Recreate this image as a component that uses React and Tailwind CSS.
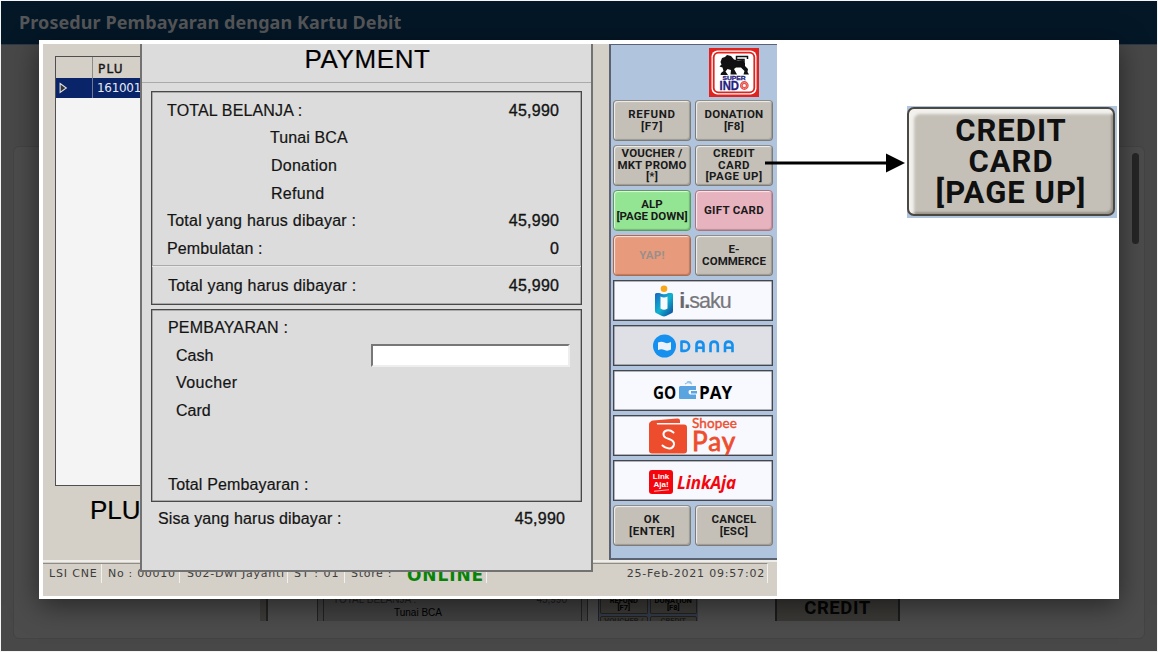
const ROW = "flex h-[27.6px] items-center justify-between";
const AMOUNT = "tracking-[0.25px] -mr-[0.25px] [-webkit-text-stroke:0.35px_#141414]";

function PosKey({ lines, tone = "bg-[#c4c0b8] border-[#7d7b76] border-t-[#8f8d88]", text = "text-[#1a1a1a]", tight = "tracking-[0.7px]" }) {
  return (
    <div className={`flex h-[41px] flex-col items-center justify-center rounded-[4px] border-[1.5px] font-['Roboto',sans-serif] shadow-[inset_1px_1px_1px_rgba(255,255,255,0.75),inset_-1px_-1px_1px_rgba(0,0,0,0.2)] ${tone}`}>
      {lines.map((l) => (
        <div key={l} className={`whitespace-nowrap text-[11.5px] leading-[11.4px] font-bold ${text} ${tight}`}>{l}</div>
      ))}
    </div>
  );
}

function WalletKey({ children, bg = "bg-[#f8f9ff]" }) {
  return (
    <div className={`col-span-2 flex h-[41px] items-center justify-center overflow-hidden border-[1.5px] border-[#44484e] shadow-[inset_0_0_0_0.5px_#6a6e74] ${bg}`}>
      {children}
    </div>
  );
}

function SuperIndo() {
  return (
    <svg className="h-[49px] w-[50px]" viewBox="0 0 50 49">
      <rect width="50" height="49" fill="#e0231f" />
      <rect x="2.5" y="2.5" width="45" height="44" rx="6" fill="#fff" />
      <rect x="3.800" y="3.800" width="42.400" height="41.400" rx="5.500" fill="#e0231f" />
      <rect x="5.6" y="5.6" width="38.8" height="37.8" rx="4" fill="#fff" />
      <path d="M11.500 14 L13 10 L16 9 L18 7 L22 8 L25 11.500 L29 12.500 L34 12 L36 15 L36 18 L39 21 L38.500 24 L40 26.500 L34.500 26.500 L35.500 23 L32 19.500 L27 19.500 L25 21 L28 26.500 L21.500 26.500 L22 22 L18.500 21 L16.500 23.500 L19 27 L11.500 27 L12 25 L14.500 23 L13.500 19.500 L10.500 18.500 L12.500 16.500 Z" fill="#111" />
      <path d="M35 14.500 V11.500 H27.500 V8.500 H38.500 V11" fill="none" stroke="#111" strokeWidth="1.500" />
      <text x="25" y="32" textAnchor="middle" textLength="23" lengthAdjust="spacingAndGlyphs" fontFamily="Liberation Sans, sans-serif" fontWeight="bold" fontSize="5.500" stroke="#26217c" strokeWidth="0.300" fill="#26217c">SUPER</text>
      <text x="10.500" y="42" textLength="19.500" lengthAdjust="spacingAndGlyphs" fontFamily="Liberation Sans, sans-serif" fontWeight="bold" fontSize="12" stroke="#26217c" strokeWidth="0.300" fill="#26217c">IND</text>
      <circle cx="35.300" cy="37.500" r="3" fill="none" stroke="#e8504a" strokeWidth="2.800" />
      <circle cx="35.300" cy="37.500" r="3" fill="none" stroke="#fbc9c6" strokeWidth="0.700" strokeDasharray="1.300 1" />
    </svg>
  );
}

function ISaku() {
  return (
    <div className="flex items-center gap-[6px]">
      <svg className="h-[32px] w-[18px]" viewBox="0 0 18 32">
        <defs>
          <linearGradient id="isaku" x1="0" y1="0" x2="1" y2="1">
            <stop offset="0" stopColor="#1566c4" />
            <stop offset="0.500" stopColor="#10b4cf" />
            <stop offset="1" stopColor="#123f9b" />
          </linearGradient>
        </defs>
        <circle cx="9" cy="3.800" r="3.300" fill="#f9a61a" />
        <path d="M0 9.500 Q0 8 1.500 8 H4.500 Q9 10.500 13.500 8 H16.500 Q18 8 18 9.500 V26 Q18 28 16 28.600 L11 31 Q9 31.800 7 31 L2 28.600 Q0 28 0 26 Z" fill="url(#isaku)" />
        <path d="M5.500 11.500 Q9 13.500 12.500 11.500 V23.500 Q9 26 5.500 23.500 Z" fill="#f8f9ff" />
      </svg>
      <div className="pt-[2px] text-[21.5px] leading-none tracking-[-0.95px] text-[#77777b] [-webkit-text-stroke:0.2px_#77777b]"><b className="text-[#68686c]">i.</b>saku</div>
    </div>
  );
}

function Dana() {
  return (
    <svg className="ml-[2px] h-[26px] w-[82px]" viewBox="0 0 82 26">
      <circle cx="11.500" cy="13" r="11.500" fill="#1590ee" />
      <path d="M5 9.500 Q8.500 8 11.500 9.500 T18 9 V16.500 Q14.500 18.500 11.500 17 T5 17 Z" fill="#eaf1fb" />
      <g fill="none" stroke="#1590ee" strokeWidth="2.600" strokeLinejoin="round">
        <path d="M28.500 8.600 H31.500 A4.600 4.600 0 0 1 31.500 17.900 H28.500 Z" />
        <path d="M43.500 19.300 V12 Q43.500 8.600 46.800 8.600 T50.500 12 V19.300 M43.500 14.800 H50.500" />
        <path d="M57.500 19.300 V12 Q57.500 8.600 61 8.600 T64.800 12 V19.300" />
        <path d="M72 19.300 V12 Q72 8.600 75.500 8.600 T79.500 12 V19.300 M72 14.800 H79.500" />
      </g>
    </svg>
  );
}

function GoPay() {
  return (
    <div className="flex items-center gap-[2px] pt-[3px] pr-px font-['Open_Sans',sans-serif] text-[18px] leading-none font-bold text-black">
      <span className="inline-block w-[24px] origin-left scale-x-[0.85]">GO</span>
      <svg className="h-[18px] w-[18px] -translate-y-[2px]" viewBox="0 0 18 18">
        <path d="M1 5 H17 V9 H11 Q9.500 9 9.500 11 T11 13.500 H17 V18 H1 Q0 18 0 17 V6 Z" fill="#5aa5df" />
        <path d="M12 10 H18 V12.500 H12 Z" fill="#5aa5df" />
        <path d="M6 3 Q9 0.500 13 3 M8 1 Q10 0 12.500 1.500" fill="none" stroke="#8cc2ea" strokeWidth="1.200" />
      </svg>
      <span className="inline-block w-[33px] origin-left scale-x-[0.95]">PAY</span>
    </div>
  );
}

function ShopeePay() {
  return (
    <div className="flex items-center gap-[5px]">
      <svg className="h-[36px] w-[38px]" viewBox="0 0 38 36">
        <path d="M1 5 Q1 3 4 2.500 L28 0.500 Q31 0.200 31 2.500 V5 Z" fill="#ee4d2d" />
        <rect x="0" y="6.500" width="38" height="29" rx="3" fill="#ee4d2d" />
        <rect x="0" y="4" width="8" height="9" rx="2" fill="#ee4d2d" />
        <path d="M24.500 14.500 Q21 11.500 17.500 12.500 Q13.500 14 14.800 17.800 Q15.500 19.800 20 21 Q25.500 22.800 25 26.500 Q24 31 19 30.300 Q16 30 13.500 27.500" fill="none" stroke="#fff" strokeWidth="2" strokeLinecap="round" />
      </svg>
      <div className="-mt-[2px] flex w-[45px] flex-col font-['Lato',sans-serif] text-[#ee4d2d]">
        <span className="text-[13.5px] leading-[14px] font-normal tracking-[0.15px] [-webkit-text-stroke:0.4px_#ee4d2d]">Shopee</span>
        <span className="text-[26px] leading-[23px] font-normal tracking-[1px] [-webkit-text-stroke:0.8px_#ee4d2d]">Pay</span>
      </div>
    </div>
  );
}

function LinkAja() {
  return (
    <div className="flex items-center gap-[4px] pt-[3px] pr-px">
      <div className="flex h-[24px] w-[24px] flex-col items-center justify-center rounded-[3px] bg-[#f5060d] text-[8px] leading-[8px] font-bold text-white">
        <span>Link</span>
        <span>Aja!</span>
        <span className="mt-px h-px w-[15px] -rotate-6 bg-white/70" />
      </div>
      <div className="font-['Noto_Sans',sans-serif] text-[17px] leading-none font-bold tracking-[-0.1px] text-[#f5060d] italic">LinkAja</div>
    </div>
  );
}

function PosScreen() {
  return (
    <div className="relative flex h-[552px] w-[734px] shrink-0 flex-col bg-[#d4cfc7]">
      <div className="flex h-[516px]">
        <div className="flex w-[566px] flex-col pt-[12px] pl-[12px]">
          <div className="h-[430px] w-[200px] border-[1.5px] border-[#4f4f4f] bg-[#f4f4f4] font-['DejaVu_Sans',sans-serif] text-[#161616]">
            <div className="flex h-[21px] bg-[#d4cfc7] text-[12px]">
              <div className="w-[37px] border-r border-[#8b8b8b]" />
              <div className="pt-[3px] pl-[5px] leading-[18px] tracking-[1.2px] [-webkit-text-stroke:0.4px_#161616]">PLU</div>
            </div>
            <div className="flex h-[20px] bg-[#0a246a] text-[12px] text-[#e6e9f2]">
              <div className="flex w-[37px] items-center border-r border-[#71788f] pl-[3px]">
                <svg className="h-[12px] w-[9px]" viewBox="0 0 8 10"><path d="M1 1 L6.500 5 L1 9 Z" fill="#333" stroke="#ddd" /></svg>
              </div>
              <div className="pl-[4px] leading-[20px] tracking-[-0.3px]">161001</div>
            </div>
          </div>
          <div className="pt-[7px] pl-[35px] text-[26px] leading-[34px] text-black [-webkit-text-stroke:0.2px_#000]">PLU</div>
        </div>
        <div className="flex w-[168px] flex-col border-t-[1.5px] border-b-2 border-l-2 border-t-[#5b6372] border-b-[#5b6372] border-l-[#5b6372] bg-[#b0c4de] pl-[2px]">
          <div className="flex h-[55px] pt-[3px] pl-[96px]"><SuperIndo /></div>
          <div className="grid w-[160px] grid-cols-2 gap-[4px]">
            <PosKey lines={["REFUND", "[F7]"]} />
            <PosKey lines={["DONATION", "[F8]"]} tight="tracking-[0.2px]" />
            <PosKey lines={["VOUCHER /", "MKT PROMO", "[*]"]} tight="tracking-[0.15px]" />
            <PosKey lines={["CREDIT", "CARD", "[PAGE UP]"]} tight="tracking-[0.5px]" />
            <PosKey lines={["ALP", "[PAGE DOWN]"]} tone="bg-[#93e493] border-[#5c9c60]" tight="tracking-[0px]" />
            <PosKey lines={["GIFT CARD"]} tone="bg-[#e7b3bf] border-[#a9747f]" tight="tracking-[0.3px]" />
            <PosKey lines={["YAP!"]} tone="bg-[#e89b7c] border-[#b0694c]" text="text-[#9a8f8a]" tight="tracking-[0.2px]" />
            <PosKey lines={["E-", "COMMERCE"]} tight="tracking-[0.05px]" />
            <WalletKey><ISaku /></WalletKey>
            <WalletKey bg="bg-[#dfdfe6]"><Dana /></WalletKey>
            <WalletKey><GoPay /></WalletKey>
            <WalletKey><ShopeePay /></WalletKey>
            <WalletKey><LinkAja /></WalletKey>
            <PosKey lines={["OK", "[ENTER]"]} tight="tracking-[0.6px]" />
            <PosKey lines={["CANCEL", "[ESC]"]} tight="tracking-[0.2px]" />
          </div>
        </div>
      </div>
      <div className="flex h-[36px] flex-col border-t-2 border-[#efedea] pt-[1px] font-['DejaVu_Sans',sans-serif] text-[11px] text-[#3d3d3d]">
        <div className="flex h-[20px] w-[725px] border-t border-r border-t-[#8f8c86] border-r-[#f3f1ee] pl-[6px] leading-[20px] whitespace-nowrap">
          <span className="w-[53px] border-r border-[#f3f1ee] tracking-[0.85px]">LSI CNE</span>
          <span className="w-[78px] border-r border-[#f3f1ee] pl-[6px] tracking-[0.7px]">No : 00010</span>
          <span className="w-[108px] border-r border-[#f3f1ee] pl-[7px] tracking-[0.75px]">S02-Dwi Jayanti</span>
          <span className="w-[57px] border-r border-[#f3f1ee] pl-[6px] tracking-[1px]">ST : 01</span>
          <span className="w-[56px] pl-[6px] tracking-[0.7px]">Store :</span>
          <span className="w-[86px] border-r border-[#f3f1ee] pl-[6px] text-[17px] leading-[22px] font-bold tracking-[0.9px] text-[#078407]">ONLINE</span>
          <span className="ml-auto pr-[2px] tracking-[0.8px]">25-Feb-2021 09:57:02</span>
        </div>
      </div>
      <PaymentDialog />
    </div>
  );
}

function PaymentDialog() {
  return (
    <div className="absolute top-0 left-[97px] flex h-[528px] w-[453px] flex-col border-r-2 border-b-2 border-l-2 border-[#727272] bg-[#dcdcdc] text-[16px] text-[#141414] [-webkit-text-stroke:0.2px_#141414]">
      <div className="h-[39px] border-b border-[#aaa] pl-[2px] text-center text-[26px] leading-[30px] tracking-[0.6px] text-black">PAYMENT</div>
      <div className="mx-[9px] mt-[8px] h-[214px] border border-[#484848] pt-[5px] shadow-[inset_0_0_0_0.5px_#777]">
        <div className="flex h-[169px] flex-col border-b border-[#aaa] pr-[22px] pl-[15px] shadow-[0_1px_0_#e8e8e8]">
          <div className={ROW}><span className="tracking-[0.15px]">TOTAL BELANJA :</span><span className={AMOUNT}>45,990</span></div>
          <div className={`${ROW} pl-[103px] tracking-[0.1px]`}>Tunai BCA</div>
          <div className={`${ROW} pl-[104px] tracking-[0.25px]`}>Donation</div>
          <div className={`${ROW} pl-[104px] tracking-[0.3px]`}>Refund</div>
          <div className={ROW}><span className="tracking-[0.23px]">Total yang harus dibayar :</span><span className={AMOUNT}>45,990</span></div>
          <div className={ROW}><span className="tracking-[0.1px]">Pembulatan :</span><span className={AMOUNT}>0</span></div>
        </div>
        <div className="flex h-[40px] items-center justify-between pr-[22px] pl-[16px]"><span className="tracking-[0.2px]">Total yang harus dibayar :</span><span className={AMOUNT}>45,990</span></div>
      </div>
      <div className="mx-[9px] mt-[4px] flex h-[193px] flex-col border border-[#484848] pt-[4.5px] pr-[11px] pl-[16px] shadow-[inset_0_0_0_0.5px_#777]">
        <div className={`${ROW} tracking-[0.2px]`}>PEMBAYARAN :</div>
        <div className={`${ROW} pl-[8px]`}>Cash<span className="h-[23px] w-[199px] border-2 border-t-[#777] border-r-[#eee] border-b-[#eee] border-l-[#777] bg-white" /></div>
        <div className={`${ROW} pl-[8px] tracking-[0.4px]`}>Voucher</div>
        <div className={`${ROW} pl-[8px]`}>Card</div>
        <div className="mt-auto pb-[4px] leading-[24px] tracking-[0.15px]">Total Pembayaran :</div>
      </div>
      <div className="flex justify-between pt-[5px] pr-[26px] pl-[16px] leading-[24px]"><span className="tracking-[0.12px]">Sisa yang harus dibayar :</span><span className={AMOUNT}>45,990</span></div>
    </div>
  );
}

function BackPage() {
  return (
    <div className="flex h-[650px] w-[1156px] flex-col overflow-hidden bg-[#484848]">
      <div className="h-[44px] border-b border-[#2c3945] bg-[#041727] pl-[18px] font-['Noto_Sans',sans-serif] text-[18px] leading-[42px] font-bold tracking-[0.09px] text-[#555658]">Prosedur Pembayaran dengan Kartu Debit</div>
      <div className="mx-[12px] mt-[101px] flex h-[493px] flex-col justify-between rounded-[6px] border border-[#434343] bg-[#4c4c4c]">
        <div className="mt-[6px] mr-[5px] h-[91px] w-[7px] self-end rounded-full bg-[#262626]" />
        <div className="mb-[17px] ml-[246px] flex h-[24px] w-[640px] overflow-hidden text-black">
          <div className="w-[8px] shrink-0 border-r-2 border-[#222] bg-[#3e3c39]" />
          <div className="ml-[49px] flex w-[271px] shrink-0 border-x border-[#222] bg-[#414141] px-[5px]">
            <div className="w-full border-x border-[#222] text-[10px]">
              <div className="flex h-[9px] items-start justify-between overflow-hidden pr-[14px] pl-[9px] leading-[5px] text-[#1c1c1c]"><span>TOTAL BELANJA :</span><span>45,990</span></div>
              <div className="pl-[70px] leading-[14px]">Tunai BCA</div>
            </div>
          </div>
          <div className="ml-[10px] grid w-[100px] shrink-0 grid-cols-2 gap-[2px] border-l border-[#222] bg-[#333c48] px-px text-center font-['Roboto',sans-serif] text-[7.5px] leading-[7px] font-bold">
            <div className="h-[17px] rounded-b-[2px] border border-t-0 border-[#24221f] bg-[#3b3a37]">REFUND<br />[F7]</div>
            <div className="h-[17px] rounded-b-[2px] border border-t-0 border-[#24221f] bg-[#3b3a37]">DONATION<br />[F8]</div>
            <div className="h-[17px] rounded-[2px] border border-[#24221f] bg-[#3b3a37] leading-[7px] text-[#1c1c1c]">VOUCHER /</div>
            <div className="h-[17px] rounded-[2px] border border-[#24221f] bg-[#3b3a37] leading-[7px] text-[#1c1c1c]">CREDIT</div>
          </div>
          <div className="ml-auto w-[125px] border-x-2 border-[#1c1c1c] bg-[#3a3936] text-center font-['Roboto',sans-serif] text-[18.5px] leading-[22px] font-bold tracking-[0.6px] text-[#050505]">CREDIT<br />CARD</div>
        </div>
      </div>
    </div>
  );
}

export default function App() {
  return (
    <div className="relative h-[652px] w-[1158px] overflow-hidden bg-[#f5f5f5] pt-px pl-px font-['Liberation_Sans',sans-serif]">
      <BackPage />
      <div className="absolute top-[40px] left-[39px] flex h-[559px] w-[1080px] bg-white p-[4px] shadow-[0_6px_26px_rgba(0,0,0,0.5)]">
        <PosScreen />
        <div className="relative flex items-start pt-[62px]">
          <svg className="-ml-[12px] mt-[46px] h-[22px] w-[142px] shrink-0" viewBox="0 0 142 22">
            <path d="M0 11 H124" stroke="#000" strokeWidth="2.800" />
            <path d="M121 1.500 L140 11 L121 20.500 Z" fill="#000" />
          </svg>
          <div className="h-[112px] w-[210px] bg-[#b0c4de] pt-px pr-[2px] pb-[2px]">
            <div className="flex h-[109px] w-[208px] flex-col items-center rounded-[7px] border-2 border-[#4b4841] bg-[#c4c0b8] pt-[6px] font-['Roboto',sans-serif] text-[31px] leading-[31px] font-bold tracking-[1px] text-[#101010] shadow-[inset_6px_6px_3px_-1px_#f3f1ee,inset_-2px_-2px_2px_#99958c]">
              <span>CREDIT</span><span>CARD</span><span>[PAGE UP]</span>
            </div>
          </div>
        </div>
      </div>
    </div>
  );
}
